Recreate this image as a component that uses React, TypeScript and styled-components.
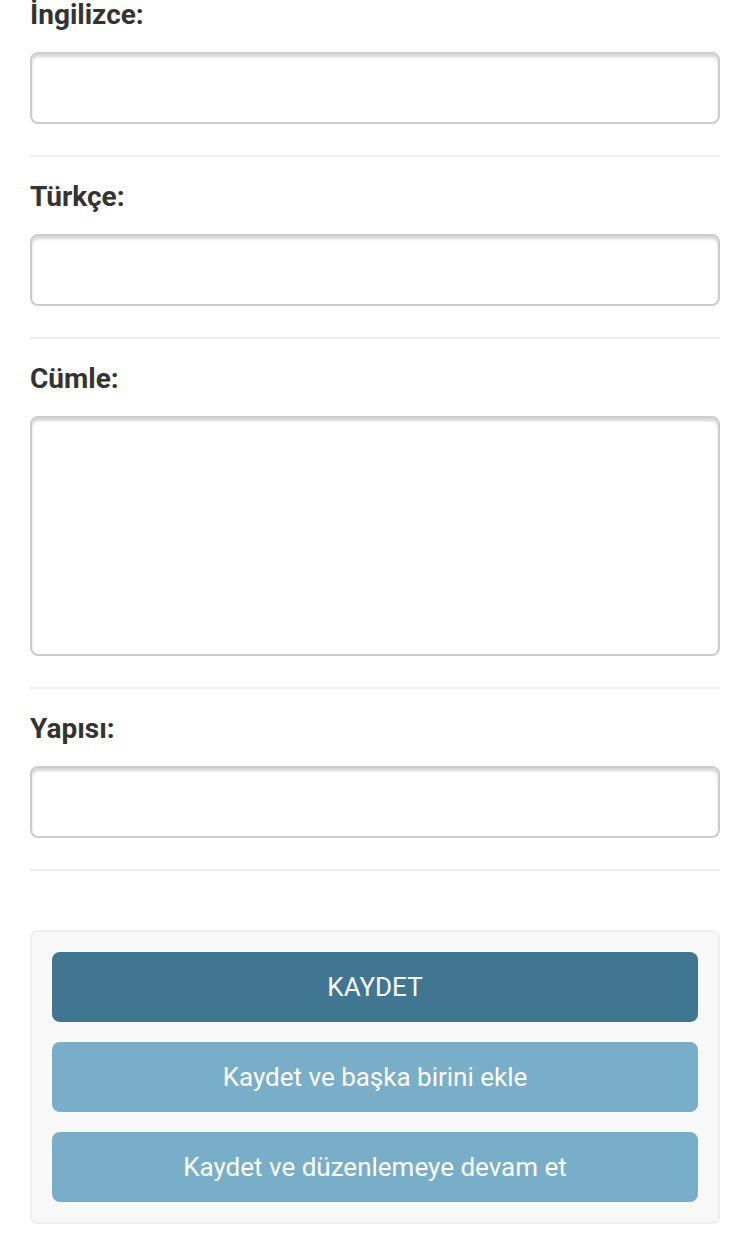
import React from "react";
import styled, { createGlobalStyle } from "styled-components";

const Global = createGlobalStyle`
  html, body { margin: 0; padding: 0; background: #fff; }
  body { font-family: Roboto, "Liberation Sans", Arial, sans-serif; color: #333; }
`;

const Page = styled.div`
  padding: 0 30px;
  margin-top: -2px;
`;

const FormRow = styled.div<{ $first?: boolean }>`
  padding: ${(p) => (p.$first ? "0" : "23px")} 0 31px;
  border-bottom: 2px solid #eee;
  display: flex;
  flex-direction: column;
`;

const Label = styled.label`
  font-size: 28px;
  line-height: 34px;
  font-weight: 700;
  color: #333;
  margin-bottom: 20px;
`;

const Input = styled.input`
  box-sizing: border-box;
  width: 100%;
  height: 72px;
  border: 2px solid #ccc;
  border-radius: 8px;
  box-shadow: inset 0 3px 3px 0 #d6d6d6;
  padding: 10px 12px;
  font-family: inherit;
  font-size: 26px;
  outline: none;
  background: #fff;
`;

const TextArea = styled.textarea`
  box-sizing: border-box;
  width: 100%;
  height: 240px;
  border: 2px solid #ccc;
  border-radius: 8px;
  box-shadow: inset 0 3px 3px 0 #d6d6d6;
  padding: 10px 12px;
  font-family: inherit;
  font-size: 26px;
  resize: none;
  outline: none;
  display: block;
  background: #fff;
`;

const SubmitRow = styled.div`
  margin-top: 59px;
  box-sizing: border-box;
  background: #f8f8f8;
  border: 2px solid #eee;
  border-radius: 8px;
  padding: 20px;
  display: flex;
  flex-direction: column;
  gap: 20px;
`;

const Button = styled.button<{ $primary?: boolean }>`
  height: 70px;
  border: none;
  border-radius: 8px;
  background: ${(p) => (p.$primary ? "#417690" : "#79aec8")};
  color: #fff;
  font-family: Roboto, "Liberation Sans", Arial, sans-serif;
  font-size: 26px;
  font-weight: 400;
  cursor: pointer;
`;

export default function App() {
  return (
    <>
      <Global />
      <Page>
        <FormRow $first>
          <Label>İngilizce:</Label>
          <Input type="text" />
        </FormRow>
        <FormRow>
          <Label>Türkçe:</Label>
          <Input type="text" />
        </FormRow>
        <FormRow>
          <Label>Cümle:</Label>
          <TextArea />
        </FormRow>
        <FormRow>
          <Label>Yapısı:</Label>
          <Input type="text" />
        </FormRow>
        <SubmitRow>
          <Button $primary>KAYDET</Button>
          <Button>Kaydet ve başka birini ekle</Button>
          <Button>Kaydet ve düzenlemeye devam et</Button>
        </SubmitRow>
      </Page>
    </>
  );
}
